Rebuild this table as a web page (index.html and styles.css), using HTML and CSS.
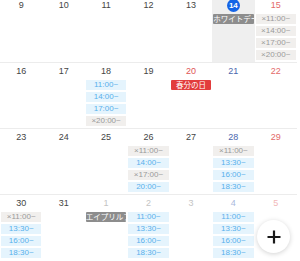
FILE: index.html
```html
<!DOCTYPE html>
<html lang="ja">
<head>
<meta charset="utf-8">
<link rel="stylesheet" href="styles.css">
</head>
<body>
<div class="cal">
  <div class="cell"><div class="d">9</div></div>
  <div class="cell"><div class="d">10</div></div>
  <div class="cell"><div class="d">11</div></div>
  <div class="cell"><div class="d">12</div></div>
  <div class="cell"><div class="d">13</div></div>
  <div class="cell today"><div class="d"><span class="circle">14</span></div>
    <div class="ev"><div class="lab gray">ホワイトデー</div></div></div>
  <div class="cell"><div class="d sat">15</div>
    <div class="ev"><div class="t off">×11:00~</div><div class="t off">×14:00~</div><div class="t off">×17:00~</div><div class="t off">×20:00~</div></div></div>

  <div class="cell"><div class="d">16</div></div>
  <div class="cell"><div class="d">17</div></div>
  <div class="cell"><div class="d">18</div>
    <div class="ev"><div class="t">11:00~</div><div class="t">14:00~</div><div class="t">17:00~</div><div class="t off">×20:00~</div></div></div>
  <div class="cell"><div class="d">19</div></div>
  <div class="cell"><div class="d hol">20</div>
    <div class="ev"><div class="lab red">春分の日</div></div></div>
  <div class="cell"><div class="d fri">21</div></div>
  <div class="cell"><div class="d sat">22</div></div>

  <div class="cell"><div class="d">23</div></div>
  <div class="cell"><div class="d">24</div></div>
  <div class="cell"><div class="d">25</div></div>
  <div class="cell"><div class="d">26</div>
    <div class="ev"><div class="t off">×11:00~</div><div class="t">14:00~</div><div class="t off">×17:00~</div><div class="t">20:00~</div></div></div>
  <div class="cell"><div class="d">27</div></div>
  <div class="cell"><div class="d fri">28</div>
    <div class="ev"><div class="t off">×11:00~</div><div class="t">13:30~</div><div class="t">16:00~</div><div class="t">18:30~</div></div></div>
  <div class="cell"><div class="d sat">29</div></div>

  <div class="cell"><div class="d">30</div>
    <div class="ev"><div class="t off">×11:00~</div><div class="t">13:30~</div><div class="t">16:00~</div><div class="t">18:30~</div></div></div>
  <div class="cell"><div class="d">31</div></div>
  <div class="cell"><div class="d next">1</div>
    <div class="ev"><div class="lab gray">エイプリルフール</div></div></div>
  <div class="cell"><div class="d next">2</div>
    <div class="ev"><div class="t">11:00~</div><div class="t">13:30~</div><div class="t">16:00~</div><div class="t">18:30~</div></div></div>
  <div class="cell"><div class="d next">3</div></div>
  <div class="cell"><div class="d next fri">4</div>
    <div class="ev"><div class="t">11:00~</div><div class="t">13:30~</div><div class="t">16:00~</div><div class="t">18:30~</div></div></div>
  <div class="cell"><div class="d next sat">5</div></div>
</div>
<button class="fab" aria-label="追加">
  <svg width="14" height="14" viewBox="0 0 14 14"><path d="M7 0.5V13.5M0.5 7H13.5" stroke="#1a1a1a" stroke-width="2.2" fill="none"/></svg>
</button>
</body>
</html>
```

FILE: styles.css
```css
html, body {
  margin: 0;
  padding: 0;
  background: #fff;
  overflow: hidden;
}
body {
  width: 300px;
  height: 261px;
  position: relative;
  font-family: "Liberation Sans", "Noto Sans CJK JP", sans-serif;
}
.cal {
  width: 297px;
  margin-top: -4px;
  display: grid;
  grid-template-columns: repeat(7, 1fr);
}
.cell {
  height: 66px;
  box-sizing: border-box;
  border-top: 1px solid #ececec;
  min-width: 0;
}
.cell.today {
  background: #efefef;
}
.d {
  height: 16px;
  display: flex;
  align-items: center;
  justify-content: center;
  font-size: 9px;
  color: #444;
}
.d.sat { color: #e36a6a; }
.d.hol { color: #e05555; }
.d.fri { color: #4a67ae; }
.d.next { color: #c4c4c4; }
.d.next.fri { color: #a9b9dd; }
.d.next.sat { color: #f2b8b8; }
.circle {
  width: 13px;
  height: 13px;
  border-radius: 50%;
  background: #1464e6;
  color: #fff;
  font-weight: bold;
  font-size: 8px;
  display: flex;
  align-items: center;
  justify-content: center;
}
.ev {
  margin-top: 1px;
  padding: 0 1px;
  display: flex;
  flex-direction: column;
  gap: 2px;
}
.t {
  height: 10px;
  line-height: 10px;
  font-size: 8px;
  text-align: center;
  background: #e5f4fd;
  color: #58b0ec;
  white-space: nowrap;
  overflow: hidden;
}
.t.off {
  background: #f1efed;
  color: #9a9a9a;
}
.lab {
  height: 10px;
  line-height: 10px;
  font-size: 7.5px;
  text-align: center;
  color: #fff;
  white-space: nowrap;
  overflow: hidden;
  border-radius: 1px;
  font-family: "Noto Sans CJK JP", sans-serif;
}
.lab.gray { background: #8d8d8d; }
.lab.red { background: #e23c3c; }
.fab {
  position: absolute;
  left: 257px;
  top: 220px;
  width: 33px;
  height: 33px;
  border-radius: 50%;
  border: none;
  padding: 0;
  background: #fff;
  box-shadow: 0 1px 5px rgba(0, 0, 0, 0.18);
  display: flex;
  align-items: center;
  justify-content: center;
}
```
